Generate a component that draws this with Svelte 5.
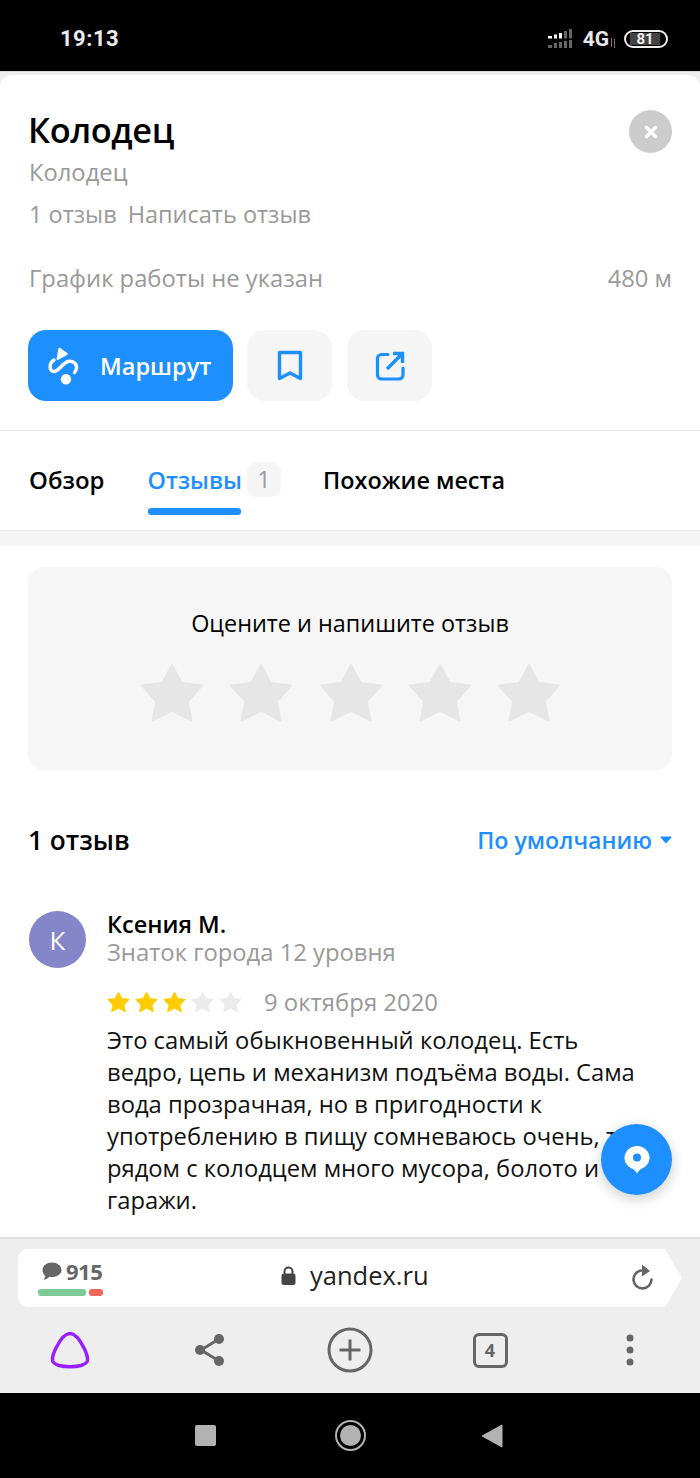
<script>
  const stars = [1, 2, 3, 4, 5];
  const ratingStar = "M32 2L41.700 20 62 22.500 47.700 38.700 51.500 57.500 32 47.700 12.500 57.500 16.300 38.700 2 22.500 22.300 20z";
</script>

<div class="screen">
  <header class="status">
    <span class="time">19:13</span>
    <div class="status-right">
      <svg class="signal" width="28" height="20" viewBox="0 0 28 20" aria-hidden="true">
        <g fill="#fff"><rect x="0" y="7" width="4" height="2.500"/><rect x="6" y="5.500" width="3" height="4"/><rect x="11" y="4" width="3" height="5.500"/></g>
        <g fill="#666"><rect x="16" y="2" width="3" height="7.500"/><rect x="21" y="0" width="3" height="9.500"/><rect x="0" y="16" width="4" height="3"/><rect x="6" y="14" width="3" height="5"/><rect x="11" y="13" width="3" height="6"/><rect x="16" y="12" width="3" height="7"/><rect x="21" y="11" width="3" height="8"/></g>
      </svg>
      <span class="net">4G</span>
      <svg class="arrows" width="6" height="10" viewBox="0 0 6 10" aria-hidden="true"><path d="M1.500 0v9M4.500 1v9" stroke="#777" stroke-width="1"/></svg>
      <div class="battery"><div class="battery-fill"><span>81</span></div></div>
    </div>
  </header>

  <div class="content">
    <main class="card">
      <section class="head">
        <div class="title-row">
          <h1>Колодец</h1>
          <button class="close" aria-label="Закрыть">
            <svg width="16" height="16" viewBox="0 0 16 16"><path d="M3.500 3.500l9 9M12.500 3.500l-9 9" stroke="#fff" stroke-width="3.400" stroke-linecap="round"/></svg>
          </button>
        </div>
        <p class="muted category">Колодец</p>
        <p class="muted reviews-line"><span>1 отзыв</span><span>Написать отзыв</span></p>
        <div class="hours-row muted"><span>График работы не указан</span><span>480 м</span></div>
        <div class="actions">
          <button class="route">
            <svg width="34" height="38" viewBox="6 7 34 38" aria-hidden="true">
              <path d="M18.500 9L25.500 14 16.800 18.800z" fill="#fff" stroke="#fff" stroke-width="2.400" stroke-linejoin="round"/>
              <path d="M13 20C8 23 8 30 12 31.500C17 33 21 23 27 21.500C33 20 37 25 35 30L33.500 32.500" fill="none" stroke="#fff" stroke-width="3.400" stroke-linecap="round"/>
              <circle cx="25" cy="39.300" r="5.200" fill="#fff"/>
            </svg>
            <span>Маршрут</span>
          </button>
          <button class="icon-btn" aria-label="Сохранить">
            <svg width="26" height="32" viewBox="0 0 26 32"><path d="M2.500 2.500h21v26L13 23 2.500 28.500z" fill="none" stroke="#1e8fff" stroke-width="3.400" stroke-linejoin="round"/></svg>
          </button>
          <button class="icon-btn" aria-label="Поделиться">
            <svg width="30" height="30" viewBox="0 0 30 30"><path d="M13 3.500H6.500a4 4 0 0 0-4 4V24a4 4 0 0 0 4 4H24a4 4 0 0 0 4-4v-7" fill="none" stroke="#1e8fff" stroke-width="3.200" stroke-linecap="round"/><path d="M12 18L26 4M18 2.500h9.500V12" fill="none" stroke="#1e8fff" stroke-width="3.400"/></svg>
          </button>
        </div>
      </section>

      <nav class="tabs">
        <span class="tab first">Обзор</span>
        <span class="tab active">Отзывы<i class="count">1</i></span>
        <span class="tab">Похожие места</span>
      </nav>
      <div class="divider"></div>

      <section class="rate">
        <div class="rate-box">
          <p>Оцените и напишите отзыв</p>
          <div class="rate-stars">
            {#each stars as s (s)}
              <svg width="64" height="60" viewBox="0 0 64 60" aria-hidden="true"><path d={ratingStar} fill="#e6e6e6" stroke="#e6e6e6" stroke-width="2" stroke-linejoin="round"/></svg>
            {/each}
          </div>
        </div>
      </section>

      <section class="reviews">
        <div class="reviews-head">
          <h2>1 отзыв</h2>
          <span class="sort">По умолчанию<svg width="12" height="8" viewBox="0 0 12 8" aria-hidden="true"><path d="M1 .500h10a.600.600 0 0 1 .500 1L6.500 7a.700.700 0 0 1-1 0L.500 1.500A.600.600 0 0 1 1 .500z" fill="#1e8fff"/></svg></span>
        </div>
        <article class="review">
          <div class="avatar">К</div>
          <div class="review-body">
            <div class="author">Ксения М.</div>
            <div class="muted level">Знаток города 12 уровня</div>
            <div class="meta">
              <div class="small-stars">
                {#each stars as s (s)}
                  {@const c = s <= 3 ? '#fc0' : '#ebebeb'}
                  <svg width="23" height="22" viewBox="0 0 64 60" aria-hidden="true"><path d={ratingStar} fill={c} stroke={c} stroke-width="2" stroke-linejoin="round"/></svg>
                {/each}
              </div>
              <span class="muted">9 октября 2020</span>
            </div>
            <p class="text">Это самый обыкновенный колодец. Есть ведро, цепь и механизм подъёма воды. Сама вода прозрачная, но в пригодности к употреблению в пищу сомневаюсь очень, т.к. рядом с колодцем много мусора, болото и гаражи.</p>
          </div>
        </article>
      </section>
    </main>

    <button class="fab" aria-label="Моё местоположение">
      <svg width="26" height="30" viewBox="0 0 26 30"><path d="M13 1C6 1 .500 6.300.500 13c0 5.500 4 9 7.500 10.500 2 .900 3.500 2.500 5 5 1.500-2.500 3-4.100 5-5 3.500-1.500 7.500-5 7.500-10.500C25.500 6.300 20 1 13 1z" fill="#fff"/><circle cx="13" cy="12.500" r="4" fill="#1e8fff"/></svg>
    </button>
  </div>

  <footer class="browser">
    <div class="address">
      <div class="comments">
        <div class="comment-count">
          <svg width="20" height="18" viewBox="0 0 20 18" aria-hidden="true"><path d="M10 .500c5.200 0 9.500 3.200 9.500 7.500s-4.300 7-9.500 7c-1 0-2-.100-2.800-.300C5.500 17 3.500 17.500 1.500 17.500c1-1 1.700-2.200 1.800-3.700C1.500 12.500.500 10.500.500 8 .500 3.700 4.800.500 10 .500z" fill="#666"/></svg>
          <b>915</b>
        </div>
        <div class="karma"><i class="good"></i><i class="bad"></i></div>
      </div>
      <div class="url">
        <svg width="15" height="20" viewBox="0 0 15 20" aria-hidden="true"><path d="M3.500 8V5.500a4 4 0 0 1 8 0V8" fill="none" stroke="#444" stroke-width="2"/><rect x=".500" y="7.500" width="14" height="11.500" rx="2.500" fill="#444"/></svg>
        <span>yandex.ru</span>
      </div>
      <svg class="reload" width="24" height="26" viewBox="0 0 24 26" aria-hidden="true"><path d="M11 6.500a9 9 0 1 0 10.500 9" fill="none" stroke="#666" stroke-width="2.600" stroke-linecap="round"/><path d="M12 .500l8 6.500-8 5.500z" fill="#666"/></svg>
    </div>
    <div class="toolbar">
      <svg width="44" height="40" viewBox="8 5 44 40" aria-label="Алиса"><path d="M30 8.500C35 8.500 40 15 44 23C46.500 28 48 32 47.500 35.500C47 38 44 39.500 41 40.500C37 41.500 33 41.700 30 41.700C27 41.700 23 41.500 19 40.500C16 39.500 13 38 12.500 35.500C12 32 13.500 28 16 23C20 15 25 8.500 30 8.500z" fill="none" stroke="#9a1fff" stroke-width="3.500"/></svg>
      <svg width="32" height="34" viewBox="0 0 32 34" aria-label="Поделиться"><path d="M25 6L7 17l18 11" fill="none" stroke="#666" stroke-width="3"/><circle cx="25" cy="6" r="5" fill="#666"/><circle cx="6" cy="17" r="5" fill="#666"/><circle cx="25" cy="28" r="5" fill="#666"/></svg>
      <svg width="46" height="46" viewBox="0 0 46 46" aria-label="Новая вкладка"><circle cx="23" cy="23" r="21" fill="none" stroke="#666" stroke-width="3"/><path d="M23 12.500v21M12.500 23h21" stroke="#666" stroke-width="3"/></svg>
      <div class="tabs-count">4</div>
      <svg width="12" height="34" viewBox="0 0 12 34" aria-label="Меню"><circle cx="6" cy="5" r="3.500" fill="#666"/><circle cx="6" cy="17" r="3.500" fill="#666"/><circle cx="6" cy="29" r="3.500" fill="#666"/></svg>
    </div>
  </footer>

  <div class="nav">
    <span class="square"></span>
    <span class="circle"><i></i></span>
    <svg class="back" width="22" height="24" viewBox="0 0 22 24" aria-hidden="true"><path d="M21 1v22L1 12z" fill="#b2b2b2" stroke="#b2b2b2" stroke-linejoin="round"/></svg>
  </div>
</div>

<style>
  :global(body) { margin: 0; background: #000; }
  * { box-sizing: border-box; }
  p, h1, h2 { margin: 0; font-weight: inherit; }
  button { border: 0; padding: 0; font: inherit; }
  .screen {
    width: 700px; height: 1478px; display: flex; flex-direction: column; overflow: hidden;
    font-family: "Open Sans", "Noto Sans", sans-serif; color: #000;
  }

  .status { height: 71px; flex: none; background: #000; color: #fff; display: flex; align-items: center; justify-content: space-between; padding: 6px 32px 0 60px; font-family: Roboto, sans-serif; }
  .time { font-size: 22px; font-weight: 700; letter-spacing: .5px; color: #ececec; }
  .status-right { display: flex; align-items: center; }
  .signal { margin-right: 7px; }
  .net { font-size: 21px; font-weight: 700; color: #e8e8e8; margin-right: 1px; }
  .arrows { margin-top: 8px; }
  .battery { width: 44px; height: 18px; margin-left: 8px; border: 2px solid #eee; border-radius: 9px; padding: 1px; overflow: hidden; }
  .battery-fill { width: 30px; height: 12px; margin-left: 3px; background: #444; display: flex; align-items: center; justify-content: center; font-size: 15px; font-weight: 700; color: #eee; }

  .content { flex: 1; min-height: 0; position: relative; background: #eee; padding-top: 3px; overflow: hidden; border-top: 1px solid #ddd; }
  .card { background: #fff; border-radius: 12px 12px 0 0; height: 100%; overflow: hidden; }

  .muted { color: #999; }
  .head { padding: 30px 28px 29px 29px; border-bottom: 1px solid #e6e6e6; height: 356px; font-size: 23.750px; }
  .title-row { display: flex; justify-content: space-between; align-items: flex-start; height: 51px; padding-top: 5px; }
  h1 { font-size: 34.400px; line-height: 44px; font-weight: 600; letter-spacing: -.400px; margin-top: -2px; margin-left: -1px; }
  .close { width: 43px; height: 43px; border-radius: 50%; background: #ccc; display: flex; align-items: center; justify-content: center; }
  .category { line-height: 32px; }
  .reviews-line { font-size: 23.500px; line-height: 32px; margin-top: 10px; display: flex; gap: 11px; }
  .hours-row { display: flex; justify-content: space-between; line-height: 32px; margin-top: 32px; }
  .actions { display: flex; gap: 14px; margin-top: 36px; margin-left: -1px; }
  .route { width: 205px; height: 71px; border-radius: 18px; background: #1e8fff; color: #fff; display: flex; align-items: center; gap: 19px; padding-left: 19px; font-size: 23.600px; font-weight: 600; }
  .icon-btn { width: 85px; height: 71px; border-radius: 18px; background: #f5f5f5; display: flex; align-items: center; justify-content: center; }
  .icon-btn + .icon-btn { margin-left: 1px; }

  .tabs { display: flex; align-items: flex-start; height: 99px; padding: 33px 0 0 29px; font-size: 23.400px; font-weight: 600; line-height: 32px; }
  .tab { position: relative; margin-right: 44px; display: flex; }
  .tab.first { font-size: 24px; margin-right: 43px; }
  .tab.active { color: #1e8fff; }
  .tab.active::after { content: ""; position: absolute; left: 0; bottom: -18px; width: 93px; height: 7px; border-radius: 3px; background: #1e8fff; }
  .count { width: 34px; height: 35px; margin: -2px -2px 0 5px; border-radius: 10px; background: #f5f5f5; color: #999; font-style: normal; font-weight: 400; text-align: center; line-height: 35px; }
  .divider { height: 16px; background: #f5f5f5; border-top: 1px solid #eee; }

  .rate { padding: 21px 28px 0; }
  .rate-box { height: 203px; border-radius: 16px; background: #f6f6f6; padding-top: 41px; text-align: center; font-size: 23.400px; line-height: 30px; }
  .rate-stars { display: flex; justify-content: center; gap: 25.400px; margin-top: 25px; padding-left: 1px; }

  .reviews { padding: 0 28px; }
  .reviews-head { display: flex; justify-content: space-between; align-items: center; height: 40px; margin-top: 51px; }
  h2 { font-size: 26.200px; font-weight: 600; margin-top: -2px; }
  .sort { color: #1e8fff; font-size: 23.200px; font-weight: 600; display: flex; align-items: center; gap: 8px; margin-top: -2px; }
  .review { display: flex; gap: 21px; margin-top: 50px; }
  .avatar { width: 57px; height: 57px; flex: none; margin-left: 1px; border-radius: 50%; background: #8585c9; color: #fff; font-size: 26px; display: flex; align-items: center; justify-content: center; }
  .review-body { flex: 1; min-width: 0; margin-top: -1px; padding-right: 20px; }
  .author { font-size: 23.500px; font-weight: 600; line-height: 28px; }
  .level { font-size: 23.800px; line-height: 28px; }
  .meta { display: flex; align-items: center; font-size: 23.900px; line-height: 32px; margin-top: 20px; white-space: nowrap; }
  .small-stars { display: flex; gap: 5px; margin-right: 22px; }
  .text { font-size: 23.750px; line-height: 32px; color: #111; margin-top: 6px; }

  .fab { position: absolute; right: 28px; bottom: 42px; width: 71px; height: 71px; border-radius: 50%; background: #1e8fff; box-shadow: 0 4px 14px rgba(0,0,0,.2); display: flex; align-items: center; justify-content: center; }

  .browser { height: 156px; flex: none; background: #eee; border-top: 2px solid #ddd; padding-top: 10px; }
  .address { position: relative; width: 664px; height: 58px; margin-left: 18px; background: #fff; border-radius: 10px 0 0 10px; clip-path: polygon(0 0, 647px 0, 664px 29px, 647px 58px, 0 58px); display: flex; align-items: center; }
  .comments { margin-left: 20px; width: 65px; }
  .comment-count { display: flex; align-items: center; gap: 4px; height: 24px; padding-left: 4px; color: #666; font-size: 22px; margin-top: -2px; }
  .comment-count b { font-weight: 700; letter-spacing: -.500px; }
  .karma { display: flex; gap: 3px; margin-top: 6px; height: 7px; }
  .karma i { height: 7px; border-radius: 3px; }
  .good { width: 48px; background: #7fcb96; }
  .bad { width: 14px; background: #f0675c; }
  .url { position: absolute; left: 263px; top: -3px; height: 58px; display: flex; align-items: center; gap: 14px; font-size: 25.500px; color: #222; }
  .url svg { margin-top: 2px; }
  .reload { position: absolute; right: 28px; top: 15px; }
  .toolbar { display: grid; grid-template-columns: repeat(5, 140px); justify-items: center; align-items: center; height: 85px; padding-top: 1px; }
  .tabs-count { width: 35px; height: 35px; border: 3px solid #666; border-radius: 6px; color: #666; font-size: 18px; font-weight: 700; display: flex; align-items: center; justify-content: center; }

  .nav { flex: none; height: 85px; background: #000; display: grid; grid-template-columns: 145px 145px 145px; align-items: center; justify-content: center; justify-items: center; }
  .square { width: 21px; height: 21px; border-radius: 2px; background: #b2b2b2; }
  .circle { width: 31px; height: 31px; border-radius: 50%; border: 2px solid #b2b2b2; padding: 3px; }
  .circle i { display: block; width: 100%; height: 100%; border-radius: 50%; background: #b2b2b2; }
  .back { margin-right: 6px; }
</style>
